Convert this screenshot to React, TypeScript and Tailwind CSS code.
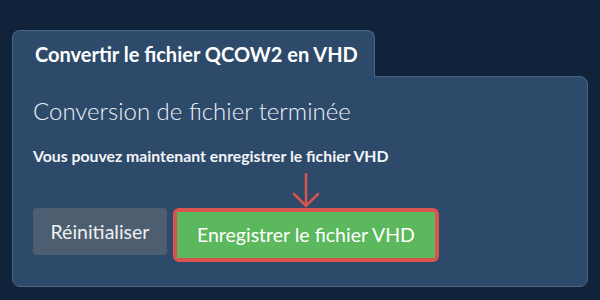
import React from "react";

export default function App() {
  return (
    <div
      className="w-[600px] h-[300px] bg-[#10233a] px-3 pt-[30px] text-white"
      style={{ fontFamily: "Lato, 'Noto Sans', sans-serif" }}
    >
      <div className="flex flex-col w-[576px]">
        <div className="relative z-10 -mb-px self-start w-[363px] h-[47px] bg-[#2d4a6b] border-t border-l border-r border-[#4b6585] rounded-t-lg pl-[22px] flex items-center">
          <span className="text-[20px] font-bold leading-none">Convertir le fichier QCOW2 en VHD</span>
        </div>
        <div className="relative h-[211px] bg-[#2d4a6b] border border-[#4b6585] rounded-b-lg rounded-tr-lg px-[20px] pt-[22px]">
          <h2 className="text-[24px] font-light leading-none text-[#eef2f6]">Conversion de fichier terminée</h2>
          <p className="mt-[25px] text-[15.8px] font-bold leading-none text-[#f3f5f7]">Vous pouvez maintenant enregistrer le fichier VHD</p>
          <div className="mt-[44px] flex items-start gap-[6px]">
            <button className="h-[47px] px-[17.5px] rounded bg-[#4d5e70] text-[19.5px] text-[#eef0f2] leading-none">Réinitialiser</button>
            <div className="relative border-4 border-[#d9534f] rounded-md">
              <button className="h-[46px] px-[20px] bg-[#5cb85c] text-[19.5px] text-white leading-none">Enregistrer le fichier VHD</button>
              <svg
                className="absolute left-1/2 -translate-x-1/2 -top-[39px]"
                width="30"
                height="35"
                viewBox="0 0 30 35"
                fill="none"
                stroke="#d9534f"
                strokeWidth="2.5"
                strokeLinecap="round"
              >
                <line x1="15" y1="1" x2="15" y2="33" />
                <polyline points="3,21 15,33 27,21" />
              </svg>
            </div>
          </div>
        </div>
      </div>
    </div>
  );
}
